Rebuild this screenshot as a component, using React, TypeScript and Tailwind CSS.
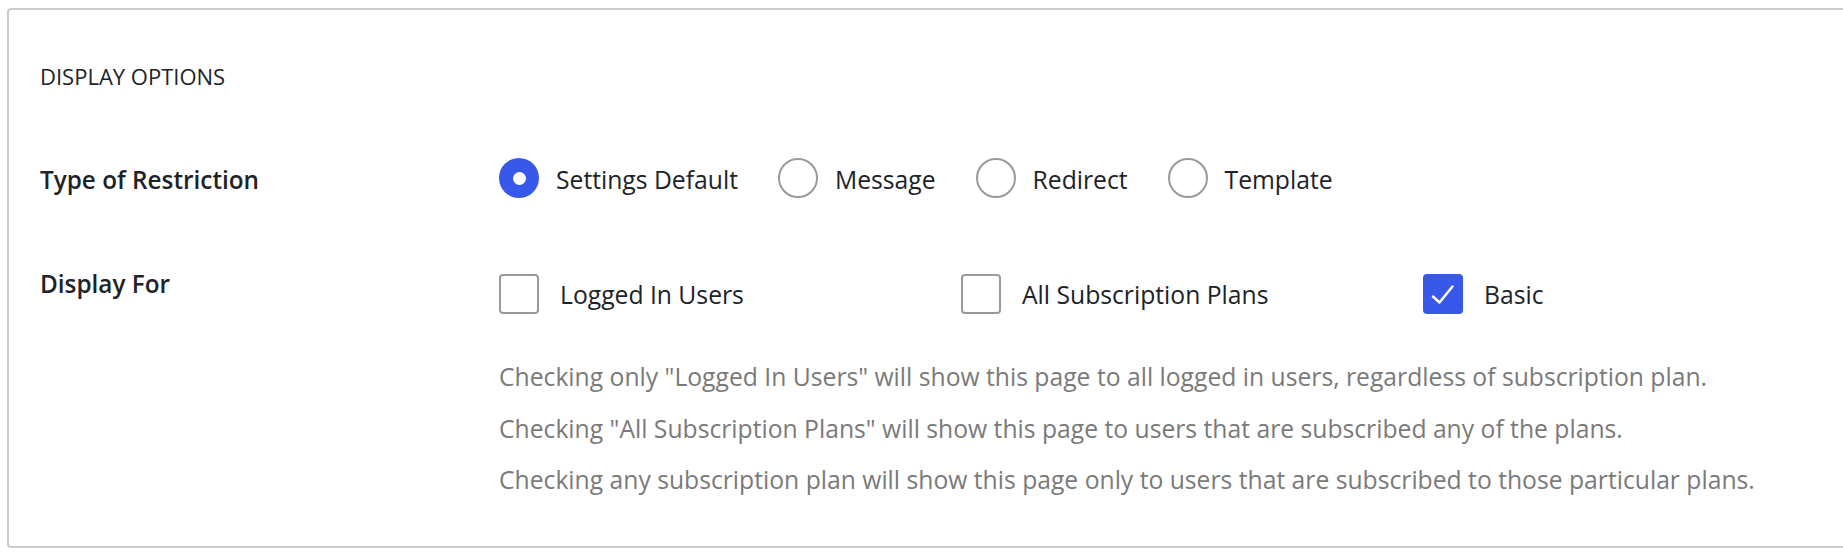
import React from "react";

const font = { fontFamily: '"Open Sans", "Noto Sans", Arial, sans-serif' };

function Radio({ checked, label }: { checked?: boolean; label: string }) {
  return (
    <div className="flex items-start mr-[40px]">
      {checked ? (
        <div className="w-[40px] h-[40px] rounded-full bg-[#3858e9] flex items-center justify-center shrink-0">
          <div className="w-[13px] h-[13px] rounded-full bg-white" />
        </div>
      ) : (
        <div className="w-[40px] h-[40px] rounded-full border-2 border-[#9a9a9a] bg-white shrink-0" />
      )}
      <span className="ml-[17px] text-[24.7px] leading-[40px] mt-[2px] text-[#1d2327]">{label}</span>
    </div>
  );
}

function Check({ checked, label }: { checked?: boolean; label: string }) {
  return (
    <div className="flex items-start w-[462px] shrink-0">
      {checked ? (
        <div className="w-[40px] h-[40px] rounded-[4px] bg-[#3858e9] shrink-0">
          <svg width="40" height="40" viewBox="0 0 40 40">
            <path d="M10 22.5 L16.5 28.5 L29.5 12.5" fill="none" stroke="#fff" strokeWidth="2.5" strokeLinecap="round" strokeLinejoin="round" />
          </svg>
        </div>
      ) : (
        <div className="w-[40px] h-[40px] rounded-[4px] border-2 border-[#9a9a9a] bg-white shrink-0" />
      )}
      <span className="ml-[21px] text-[24.7px] leading-[40px] mt-[1px] text-[#1d2327]">{label}</span>
    </div>
  );
}

export default function App() {
  return (
    <div className="w-[1843px] h-[555px] bg-white overflow-hidden pl-[7px] pt-[8px]" style={font}>
      <div className="w-[1900px] h-[540px] border-2 border-[#cccccc] rounded-[4px] pl-[31px] pt-[52px]">
        <div className="text-[22px] leading-[28px] text-[#1d2327]">DISPLAY OPTIONS</div>

        <div className="flex mt-[68px] h-[40px]">
          <div className="w-[459px] shrink-0 text-[24.3px] leading-[40px] font-semibold text-[#1d2327] mt-[2px]">
            Type of Restriction
          </div>
          <div className="flex">
            <Radio checked label="Settings Default" />
            <Radio label="Message" />
            <Radio label="Redirect" />
            <Radio label="Template" />
          </div>
        </div>

        <div className="flex mt-[66px]">
          <div className="w-[459px] shrink-0 text-[24.3px] leading-[40px] font-semibold text-[#1d2327]">
            Display For
          </div>
          <div className="flex flex-col pt-[10px]">
            <div className="flex">
              <Check label="Logged In Users" />
              <Check label="All Subscription Plans" />
              <Check checked label="Basic" />
            </div>
            <div className="mt-[36px] text-[24.7px] leading-[51.5px] text-[#7a7a7a]">
              <div>Checking only "Logged In Users" will show this page to all logged in users, regardless of subscription plan.</div>
              <div>Checking "All Subscription Plans" will show this page to users that are subscribed any of the plans.</div>
              <div>Checking any subscription plan will show this page only to users that are subscribed to those particular plans.</div>
            </div>
          </div>
        </div>
      </div>
    </div>
  );
}
